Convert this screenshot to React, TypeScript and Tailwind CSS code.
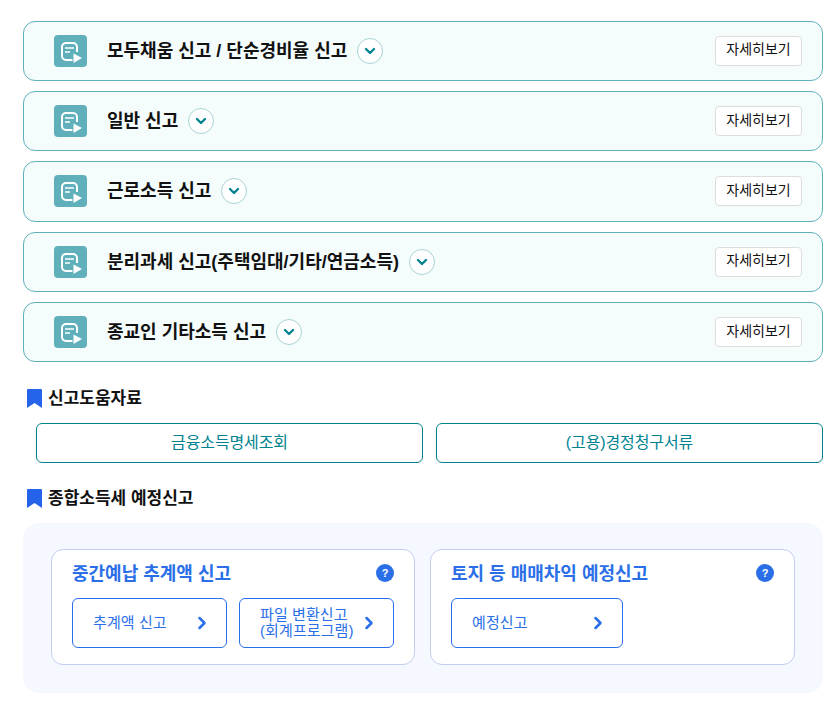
import { ChevronDown, ChevronRight } from 'lucide-react';

const rows = [
  '모두채움 신고 / 단순경비율 신고',
  '일반 신고',
  '근로소득 신고',
  '분리과세 신고(주택임대/기타/연금소득)',
  '종교인 기타소득 신고',
];

function DocIcon() {
  return (
    <span className="block h-[32px] w-[33px] shrink-0 rounded-[4px] bg-[#5fb0ba]">
      <svg width="33" height="32" viewBox="0 0 33 32" fill="none">
        <path d="M18.500 25H12A4 4 0 0 1 8 21V12A4 4 0 0 1 12 8h7A4 4 0 0 1 23 12V17" stroke="#fff" strokeWidth="2" />
        <path d="M11 13h9M11 17h5" stroke="#fff" strokeWidth="1.500" />
        <path d="M19.500 18.500l8.500 4.500-8.500 5z" fill="#fff" />
      </svg>
    </span>
  );
}

function SectionTitle({ children }: { children: string }) {
  return (
    <h2 className="flex h-[24px] items-center gap-[6px] pl-[4px] text-[17px] font-bold text-[#111]">
      <svg width="15" height="19" viewBox="0 0 15 19">
        <path d="M1 0h13a1 1 0 0 1 1 1v18l-7.500-5L0 19V1a1 1 0 0 1 1-1z" fill="#2563eb" />
      </svg>
      <span className="pt-[2px]">{children}</span>
    </h2>
  );
}

function BlueButton({ label, width }: { label: React.ReactNode; width: string }) {
  return (
    <button className={`flex h-[50px] items-center justify-between rounded-[6px] border border-[#2a6fe8] bg-white pl-[20px] pr-[14px] text-left text-[15px] leading-[16px] tracking-[0.1px] text-[#2a6fe8] ${width}`}>
      <span className="-mt-[1px]">{label}</span>
      <ChevronRight className="h-[20px] w-[20px]" strokeWidth={3} />
    </button>
  );
}

function Help() {
  return (
    <span className="flex h-[18px] w-[18px] items-center justify-center rounded-full bg-[#2a6fe8] text-[11px] font-bold text-white">
      ?
    </span>
  );
}

export default function App() {
  return (
    <div className="min-h-[712px] bg-white pl-[23px] pr-[14px] pt-[20.700px] font-['Liberation_Sans','Noto_Sans_CJK_KR',sans-serif]">
      {/* 신고 목록 */}
      <div className="flex flex-col gap-[9.900px]">
        {rows.map((title) => (
          <div
            key={title}
            className="flex h-[60.400px] items-center justify-between rounded-[12px] border border-[#5fb0ba] bg-[#f4fcfc] pl-[30px] pr-[20px]"
          >
            <div className="flex items-center">
              <DocIcon />
              <span className="ml-[20px] pt-[1px] text-[18px] font-bold text-[#111]">{title}</span>
              <span className="ml-[10px] flex h-[26px] w-[26px] items-center justify-center rounded-full border border-[#a9d3d8] bg-white">
                <ChevronDown className="h-[16px] w-[16px] text-[#00838f]" strokeWidth={3.500} />
              </span>
            </div>
            <button className="flex h-[30px] w-[87px] items-center justify-center rounded-[4px] border border-[#dddddd] bg-white pb-[2px] text-[14px] text-[#111]">
              자세히보기
            </button>
          </div>
        ))}
      </div>

      {/* 신고도움자료 */}
      <div className="mt-[24px]">
        <SectionTitle>신고도움자료</SectionTitle>
      </div>
      <div className="mt-[13px] flex gap-[13px] pl-[13px]">
        <button className="h-[40px] flex-1 rounded-[6px] border border-[#00838f] bg-white text-[16px] tracking-[-0.1px] text-[#00838f]">
          금융소득명세조회
        </button>
        <button className="h-[40px] flex-1 rounded-[6px] border border-[#00838f] bg-white text-[16px] tracking-[-0.1px] text-[#00838f]">
          (고용)경정청구서류
        </button>
      </div>

      {/* 종합소득세 예정신고 */}
      <div className="mt-[23px]">
        <SectionTitle>종합소득세 예정신고</SectionTitle>
      </div>
      <div className="mt-[13px] flex h-[170px] gap-[15px] rounded-[16px] bg-[#f5f8fe] px-[28px] pt-[26px]">
        <div className="h-[116px] w-[364px] rounded-[12px] border border-[#c3cdf0] bg-white px-[20px] pt-[11px]">
          <div className="flex h-[24px] items-center justify-between">
            <span className="pt-[2px] text-[18px] font-bold text-[#2a6fe8]">중간예납 추계액 신고</span>
            <Help />
          </div>
          <div className="mt-[13px] flex gap-[12px]">
            <BlueButton label="추계액 신고" width="w-[155px]" />
            <BlueButton
              label={
                <>
                  파일 변환신고
                  <br />
                  (회계프로그램)
                </>
              }
              width="w-[155px]"
            />
          </div>
        </div>
        <div className="h-[116px] w-[365px] rounded-[12px] border border-[#c3cdf0] bg-white px-[20px] pt-[11px]">
          <div className="flex h-[24px] items-center justify-between">
            <span className="pt-[2px] text-[18px] font-bold text-[#2a6fe8]">토지 등 매매차익 예정신고</span>
            <Help />
          </div>
          <div className="mt-[13px] flex">
            <BlueButton label="예정신고" width="w-[172px]" />
          </div>
        </div>
      </div>
    </div>
  );
}
